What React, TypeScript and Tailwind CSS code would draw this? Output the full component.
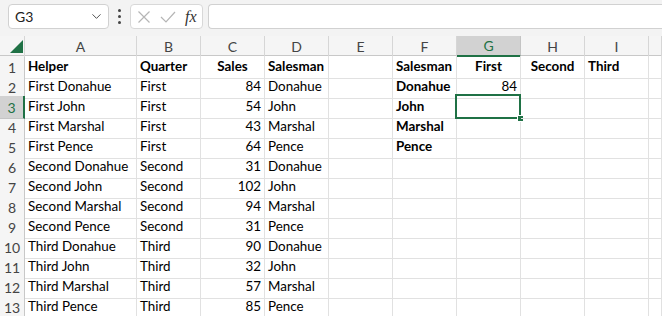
import { ChevronDown } from 'lucide-react'

const cols = ['A', 'B', 'C', 'D', 'E', 'F', 'G', 'H', 'I', '']

type Cell = { t?: string; b?: boolean; a?: 'l' | 'c' | 'r' }

const rows: Cell[][] = [
  [{ t: 'Helper', b: true }, { t: 'Quarter', b: true }, { t: 'Sales', b: true, a: 'c' }, { t: 'Salesman', b: true }, {}, { t: 'Salesman', b: true }, { t: 'First', b: true, a: 'c' }, { t: 'Second', b: true, a: 'c' }, { t: 'Third', b: true }],
  [{ t: 'First Donahue' }, { t: 'First' }, { t: '84', a: 'r' }, { t: 'Donahue' }, {}, { t: 'Donahue', b: true }, { t: '84', a: 'r' }, {}, {}],
  [{ t: 'First John' }, { t: 'First' }, { t: '54', a: 'r' }, { t: 'John' }, {}, { t: 'John', b: true }, {}, {}, {}],
  [{ t: 'First Marshal' }, { t: 'First' }, { t: '43', a: 'r' }, { t: 'Marshal' }, {}, { t: 'Marshal', b: true }, {}, {}, {}],
  [{ t: 'First Pence' }, { t: 'First' }, { t: '64', a: 'r' }, { t: 'Pence' }, {}, { t: 'Pence', b: true }, {}, {}, {}],
  [{ t: 'Second Donahue' }, { t: 'Second' }, { t: '31', a: 'r' }, { t: 'Donahue' }, {}, {}, {}, {}, {}],
  [{ t: 'Second John' }, { t: 'Second' }, { t: '102', a: 'r' }, { t: 'John' }, {}, {}, {}, {}, {}],
  [{ t: 'Second Marshal' }, { t: 'Second' }, { t: '94', a: 'r' }, { t: 'Marshal' }, {}, {}, {}, {}, {}],
  [{ t: 'Second Pence' }, { t: 'Second' }, { t: '31', a: 'r' }, { t: 'Pence' }, {}, {}, {}, {}, {}],
  [{ t: 'Third Donahue' }, { t: 'Third' }, { t: '90', a: 'r' }, { t: 'Donahue' }, {}, {}, {}, {}, {}],
  [{ t: 'Third John' }, { t: 'Third' }, { t: '32', a: 'r' }, { t: 'John' }, {}, {}, {}, {}, {}],
  [{ t: 'Third Marshal' }, { t: 'Third' }, { t: '57', a: 'r' }, { t: 'Marshal' }, {}, {}, {}, {}, {}],
  [{ t: 'Third Pence' }, { t: 'Third' }, { t: '85', a: 'r' }, { t: 'Pence' }, {}, {}, {}, {}, {}],
]

const grid = 'grid grid-cols-[25px_112px_64px_64px_64px_64px_64px_64px_64px_64px_1fr]'

export default function App() {
  return (
    <div className="w-[662px] h-[316px] overflow-hidden bg-white text-[#000] font-['Lato','Liberation_Sans',sans-serif]">
      {/* formula bar */}
      <div className="h-[36px] bg-[#f3f3f3] flex items-start pt-[4px] pl-[8px]">
        <div className="w-[101px] h-[25px] bg-white border border-[#d1d1d1] rounded-[4px] flex items-center justify-between pl-[6px] pr-[4px] text-[14px] text-[#222]">
          <span>G3</span>
          <ChevronDown size={15} strokeWidth={1.5} className="text-[#444]" />
        </div>
        <div className="w-[21px] h-[25px] flex flex-col items-center justify-center gap-[3px]">
          <span className="w-[3px] h-[3px] rounded-full bg-[#444]" />
          <span className="w-[3px] h-[3px] rounded-full bg-[#444]" />
          <span className="w-[3px] h-[3px] rounded-full bg-[#444]" />
        </div>
        <div className="w-[73px] h-[25px] bg-white border border-[#d8d8d8] rounded-[4px] flex items-center pl-[6px] gap-[9px]">
          <svg width="14" height="14" viewBox="0 0 14 14" fill="none" stroke="#b5b5b5" strokeWidth="1.2">
            <path d="M1.5 1.5 L12.5 12.5 M12.5 1.5 L1.5 12.5" />
          </svg>
          <svg width="16" height="14" viewBox="0 0 16 14" fill="none" stroke="#b5b5b5" strokeWidth="1.2">
            <path d="M1 7 L6 12 L15 2" />
          </svg>
          <span className="font-['Liberation_Serif',serif] italic text-[16px] text-[#333] leading-none">fx</span>
        </div>
        <div className="ml-[5px] flex-1 h-[25px] bg-white border border-[#d1d1d1] rounded-l-[4px] border-r-0" />
      </div>

      {/* column headers */}
      <div className={`${grid} h-[20px] bg-[#f5f5f5] border-b border-[#c8c8c8]`}>
        <div className="relative border-r border-[#d6d6d6]">
          <svg className="absolute left-[10px] top-[4px]" width="13" height="13" viewBox="0 0 13 13">
            <polygon points="13,0 13,13 0,13" fill="#1f7145" />
          </svg>
        </div>
        {cols.map((c, i) =>
          c === 'G' ? (
            <div key={i} className="bg-[#d2d2d2] border-r border-[#c4c4c4] border-b-2 border-b-[#1f7145] text-[#1f7145] text-[14px] flex items-center justify-center h-[21px]">
              {c}
            </div>
          ) : (
            <div key={i} className="border-r border-[#d6d6d6] text-[#444] text-[14px] flex items-center justify-center">
              {c}
            </div>
          )
        )}
      </div>

      {/* rows */}
      {rows.map((r, ri) => (
        <div key={ri} className={`${grid} h-[20px] ${ri === 2 ? 'relative z-10' : ''}`}>
          <div
            className={
              ri === 2
                ? 'bg-[#d2d2d2] border-b border-[#c4c4c4] border-r-2 border-r-[#1f7145] text-[#1f7145] text-[14px] flex items-center justify-center pt-[1px]'
                : 'bg-[#f5f5f5] border-b border-[#e1e1e1] border-r border-r-[#c8c8c8] text-[#444] text-[14px] flex items-center justify-center pt-[1px]'
            }
          >
            {ri + 1}
          </div>
          {[...r, {}].map((c, ci) => {
            const sel = ri === 2 && ci === 6
            return (
              <div
                key={ci}
                className={`relative border-r border-b border-[#e1e1e1] px-[3px] pt-[2px] text-[13.4px] leading-[17px] whitespace-nowrap ${c.b ? 'font-bold' : ''} ${c.a === 'r' ? 'text-right' : c.a === 'c' ? 'text-center' : 'text-left'}`}
              >
                {c.t}
                {sel && (
                  <>
                    <div className="absolute left-[-2px] top-[-2px] right-[-1px] bottom-[-1px] border-2 border-[#1f7145]" />
                    <div className="absolute right-[-4px] bottom-[-4px] w-[7px] h-[7px] bg-[#1f7145] border border-white" />
                  </>
                )}
              </div>
            )
          })}
        </div>
      ))}
    </div>
  )
}
